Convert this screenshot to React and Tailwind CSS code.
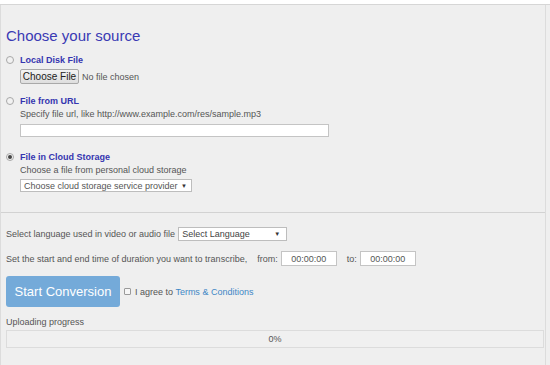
export default function App() {
  return (
    <div className="w-[550px] h-[365px] overflow-hidden bg-[#efefef] font-['Liberation_Sans',Arial,sans-serif] text-[9px] leading-[12px] text-[#555]">
      <div className="h-[5px] bg-white border-b border-[#d6d6d6]" />
      <div className="w-[546px] h-[360px] border-l border-r border-[#dcdcdc]">
        <div className="px-[5px] pt-[22px] pb-[20px]">
          <h2 className="text-[15px] leading-[18px] text-[#3a3ab4]">Choose your source</h2>

          <Option label="Local Disk File" className="mt-[9px]" />
          <div className="pl-[14px] mt-[3px] flex items-center gap-[3px]">
            <div className="h-[15px] w-[59px] flex items-center justify-center border border-[#a9a9a9] rounded-[2px] bg-gradient-to-b from-[#f4f4f4] to-[#dedede] text-[10px] text-[#222]">
              Choose File
            </div>
            <span className="text-[#555]">No file chosen</span>
          </div>

          <Option label="File from URL" className="mt-[11px]" />
          <div className="pl-[14px] mt-[1px]">Specify file url, like http://www.example.com/res/sample.mp3</div>
          <div className="ml-[14px] mt-[4px] h-[13px] w-[309px] bg-white border border-[#c4c4c4]" />

          <Option label="File in Cloud Storage" checked className="mt-[14px]" />
          <div className="pl-[14px] mt-[1px]">Choose a file from personal cloud storage</div>
          <div className="ml-[14px] mt-[3px] h-[13px] w-[172px] bg-white border border-[#bdbdbd] flex items-center justify-between pl-[3px] pr-[4px] text-[#555]">
            <span>Choose cloud storage service provider</span>
            <span className="text-[6px] text-[#333]">▼</span>
          </div>
        </div>

        <div className="border-t border-[#d2d2d2] px-[5px] pt-[14px]">
          <div className="flex items-center gap-[3px] h-[14px]">
            <span>Select language used in video or audio file</span>
            <div className="h-[14px] w-[109px] bg-white border border-[#bdbdbd] flex items-center justify-between pl-[3px] pr-[6px] text-[#444]">
              <span>Select Language</span>
              <span className="text-[6px] text-[#333]">▼</span>
            </div>
          </div>

          <div className="flex items-center h-[15px] mt-[10px]">
            <span>Set the start and end time of duration you want to transcribe,</span>
            <span className="ml-[10px]">from:</span>
            <div className="ml-[3px] h-[15px] w-[56px] bg-white border border-[#c4c4c4] flex items-center justify-center text-[#555]">00:00:00</div>
            <span className="ml-[10px]">to:</span>
            <div className="ml-[3px] h-[15px] w-[56px] bg-white border border-[#c4c4c4] flex items-center justify-center text-[#555]">00:00:00</div>
          </div>

          <div className="flex items-center mt-[10px]">
            <div className="h-[31px] w-[114px] rounded-[3px] bg-[#74aad9] text-white text-[13px] flex items-center justify-center">
              Start Conversion
            </div>
            <span className="ml-[4px] w-[7px] h-[7px] border border-[#9a9a9a] bg-[#f6f6f6] rounded-[1px]" />
            <span className="ml-[4px]">I agree to <span className="text-[#3f87c6]">Terms &amp; Conditions</span></span>
          </div>

          <div className="mt-[9px]">Uploading progress</div>
          <div className="mt-[2px] h-[18px] w-[538px] border border-[#dcdcdc] bg-[#f0f0f0] flex items-center justify-center text-[#555]">
            0%
          </div>
        </div>
      </div>
    </div>
  );
}

function Option({ label, checked, className }) {
  return (
    <div className={`flex items-center h-[12px] ${className}`}>
      <span className="w-[8px] h-[8px] rounded-full border border-[#a8a8a8] bg-[#f2f2f2] flex items-center justify-center">
        {checked && <span className="w-[4px] h-[4px] rounded-full bg-[#444]" />}
      </span>
      <span className="ml-[6px] font-bold text-[#3535b0]">{label}</span>
    </div>
  );
}
